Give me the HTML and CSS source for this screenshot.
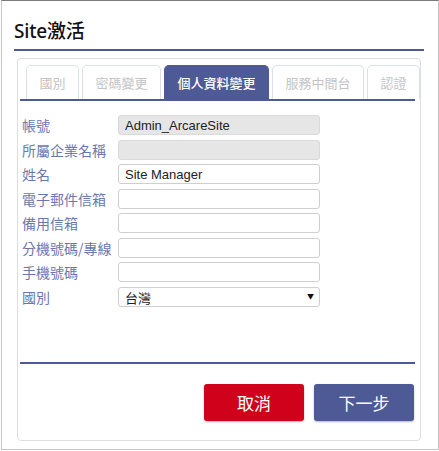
FILE: index.html
```html
<!DOCTYPE html>
<html lang="zh-Hant">
<head>
<meta charset="utf-8">
<link rel="stylesheet" href="styles.css">
</head>
<body>
<div class="dialog">
  <div class="dialog-header">
    <h1 class="dialog-title">Site激活</h1>
  </div>
  <div class="panel">
    <div class="tabs">
      <div class="tab">國別</div>
      <div class="tab">密碼變更</div>
      <div class="tab tab-active">個人資料變更</div>
      <div class="tab">服務中間台</div>
      <div class="tab">認證</div>
    </div>
    <div class="form-area">
      <div class="form">
        <label class="label">帳號</label>
        <input class="field field-disabled" type="text" value="Admin_ArcareSite" disabled>
        <label class="label">所屬企業名稱</label>
        <input class="field field-disabled" type="text" value="" disabled>
        <label class="label">姓名</label>
        <input class="field" type="text" value="Site Manager">
        <label class="label">電子郵件信箱</label>
        <input class="field" type="text" value="">
        <label class="label">備用信箱</label>
        <input class="field" type="text" value="">
        <label class="label">分機號碼/專線</label>
        <input class="field" type="text" value="">
        <label class="label">手機號碼</label>
        <input class="field" type="text" value="">
        <label class="label">國別</label>
        <div class="select-wrap">
          <select class="field select"><option>台灣</option></select>
          <span class="select-arrow">▼</span>
        </div>
      </div>
    </div>
    <div class="footer">
      <button class="btn btn-cancel">取消</button>
      <button class="btn btn-next">下一步</button>
    </div>
  </div>
</div>
</body>
</html>
```
FILE: styles.css
```css
* { box-sizing: border-box; }
html, body { margin: 0; padding: 0; background: #fff; }
body {
  font-family: "Noto Sans", "Noto Sans CJK TC", sans-serif;
}
.dialog {
  margin-left: 1px;
  width: 438px;
  height: 450px;
  border: 1px solid #c4c4c4;
  border-top-color: #7a7a7a;
  background: #fff;
}
.dialog-header {
  margin: 0 14px 0 12px;
  padding-top: 18px;
  border-bottom: 2px solid #4e5a96;
  padding-bottom: 6px;
}
.dialog-title {
  margin: 0;
  font-family: "Noto Sans", "Noto Sans CJK TC", sans-serif;
  font-size: 19px;
  line-height: 24px;
  font-weight: 500;
  color: #111;
  letter-spacing: -0.2px;
}
.panel {
  margin: 7px 17px 0 15px;
  border: 1px solid #dedede;
  border-radius: 4px;
  padding: 6px 5px 18px 2px;
  height: 383px;
}
.tabs {
  display: flex;
  gap: 3px;
  padding-left: 6px;
  height: 36px;
  border-bottom: 2px solid #4e5a96;
  white-space: nowrap;
}
.tab {
  flex-shrink: 0;
  height: 34px;
  padding: 0 12.5px;
  border: 1px solid #dcdfee;
  border-bottom: none;
  border-radius: 5px 5px 0 0;
  font-family: "Noto Sans CJK TC", sans-serif;
  font-size: 13px;
  line-height: 33px;
  color: #c4c4c4;
  background: #fff;
}
.tab-active {
  background: #4e5a96;
  border-color: #4e5a96;
  color: #fff;
  font-weight: 500;
}
.form-area {
  height: 261px;
  padding-top: 14px;
}
.form {
  display: grid;
  grid-template-columns: 98px 202px;
  row-gap: 4.57px;
  align-items: center;
}
.label {
  padding-left: 2px;
  font-family: "Noto Sans CJK TC", sans-serif;
  font-size: 14px;
  line-height: 20px;
  color: #6a78b0;
  white-space: nowrap;
}
.field {
  display: block;
  width: 202px;
  height: 20px;
  margin: 0;
  padding: 0 0 0 6px;
  border: 1px solid #cfcfcf;
  border-radius: 3px;
  font-family: "Liberation Sans", "Noto Sans CJK TC", sans-serif;
  font-size: 13px;
  color: #222;
  background: #fff;
  outline: none;
}
.field-disabled {
  background: #e6e6e6;
  border-color: #dadada;
  color: #222;
  -webkit-text-fill-color: #222;
  opacity: 1;
}
.select-wrap {
  position: relative;
  width: 202px;
  height: 20px;
}
.select {
  appearance: none;
  -webkit-appearance: none;
  font-family: "Noto Sans CJK TC", sans-serif;
  font-size: 13px;
}
.select-arrow {
  position: absolute;
  right: 6px;
  top: 5px;
  font-size: 7px;
  line-height: 10px;
  color: #111;
  pointer-events: none;
}
.footer {
  display: flex;
  justify-content: flex-end;
  gap: 10px;
  border-top: 2px solid #4e5a96;
  padding: 20px 1px 0 0;
}
.btn {
  width: 100px;
  height: 37px;
  border: none;
  border-radius: 3px;
  font-family: "Noto Sans CJK TC", sans-serif;
  font-size: 17px;
  color: #fff;
  box-shadow: 0 1px 2px rgba(0,0,0,0.3);
  padding: 0;
}
.btn-cancel { background: #d0021b; }
.btn-next { background: #4e5a96; }
```
